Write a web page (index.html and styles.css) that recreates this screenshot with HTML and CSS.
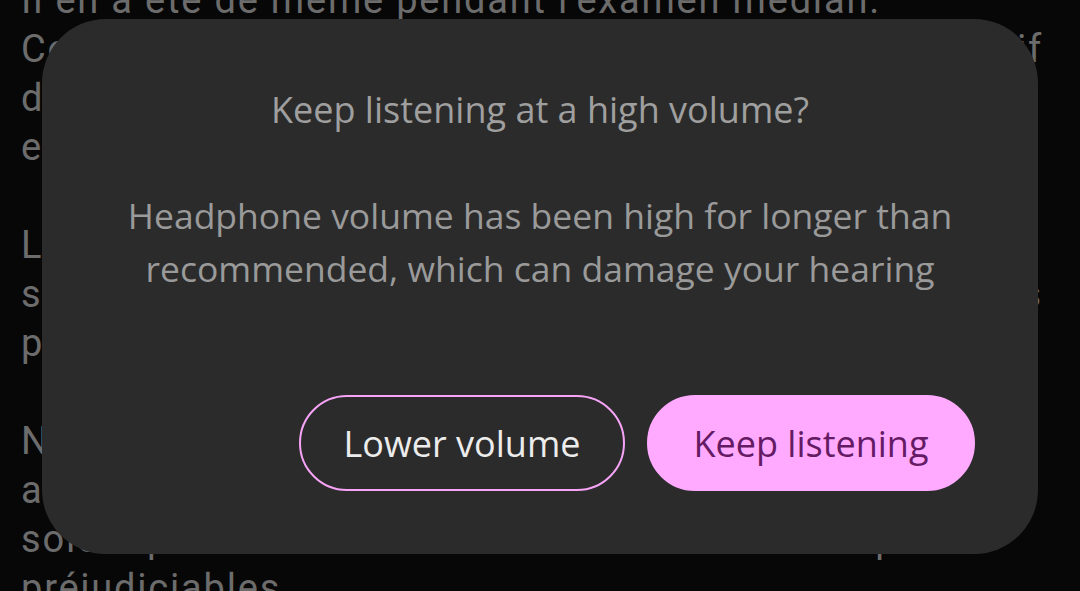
FILE: index.html
```html
<!DOCTYPE html>
<html lang="fr">
<head>
    <meta charset="UTF-8">
    <meta name="viewport" content="width=device-width, initial-scale=1.0">
    <title>Volume</title>
    <link rel="stylesheet" href="styles.css">
</head>
<body>
    <div class="page-text">
        <p>
            <span class="line">Il en a été de même pendant l'examen médian.</span>
            <span class="line full">Comme au semestre dernier, le bilan est positif</span>
            <span class="line">dans l'ensemble et les résultats sont encourageants</span>
            <span class="line">et méritent d'être soulignés.</span>
        </p>
        <p>
            <span class="line">Les modalités d'évaluation restent inchangées et</span>
            <span class="line full">seront rappelées lors des prochaines séances</span>
            <span class="line">possibles.</span>
        </p>
        <p>
            <span class="line">Nous veillerons à ce que vos données personnelles</span>
            <span class="line">aient un usage strictement pédagogique, qu'elles ne</span>
            <span class="line">soient pas instrumentalisés et ne vous soient pas</span>
            <span class="line">préjudiciables.</span>
        </p>
    </div>

    <div class="dialog">
        <h1 class="dialog-title">Keep listening at a high volume?</h1>
        <p class="dialog-text">Headphone volume has been high for longer than recommended, which can damage your hearing</p>
        <div class="dialog-actions">
            <button class="btn btn-outline">Lower volume</button>
            <button class="btn btn-filled">Keep listening</button>
        </div>
    </div>
</body>
</html>
```
FILE: styles.css
```css
body {
    margin: 0;
    padding: 0;
    width: 100vw;
    height: 100vh;
    overflow: hidden;
    background-color: #070707;
    font-family: Roboto, "Liberation Sans", sans-serif;
}

/* texte de la page derrière la fenêtre */
.page-text {
    width: 1022px;
    margin-top: -24px;
    padding-left: 21px;
    font-size: 38px;
    line-height: 49px;
    letter-spacing: 1.8px;
    color: #6c6c6c;
}

.page-text p {
    margin: 0 0 49px 0;
}

.line {
    display: block;
    white-space: nowrap;
}

.line.full {
    text-align: justify;
    text-align-last: justify;
}

.dialog {
    position: fixed;
    top: 19px;
    left: 42px;
    width: 996px;
    height: 535px;
    box-sizing: border-box;
    padding: 69px 63px 63px;
    display: flex;
    flex-direction: column;
    align-items: center;
    background-color: #2b2b2b;
    border-radius: 64px;
    font-family: "Open Sans", Roboto, sans-serif;
}

.dialog-title {
    margin: 0;
    font-size: 36px;
    font-weight: 400;
    line-height: 44px;
    color: #9f9f9f;
}

.dialog-text {
    margin: 57px 0 0 0;
    font-size: 35.5px;
    line-height: 53px;
    text-align: center;
    color: #9a9a9a;
}

.dialog-actions {
    margin-top: auto;
    align-self: flex-end;
    display: flex;
    gap: 22px;
}

.btn {
    height: 96px;
    border-radius: 48px;
    font-family: "Open Sans", Roboto, sans-serif;
    font-size: 36px;
    font-weight: 500;
    cursor: pointer;
}

.btn-outline {
    padding: 0 42.5px;
    background-color: transparent;
    border: 2px solid #f7a4f7;
    color: #ececec;
}

.btn-filled {
    padding: 0 44.5px;
    background-color: #ffaaff;
    border: 2px solid #ffaaff;
    color: #651a64;
}
```
